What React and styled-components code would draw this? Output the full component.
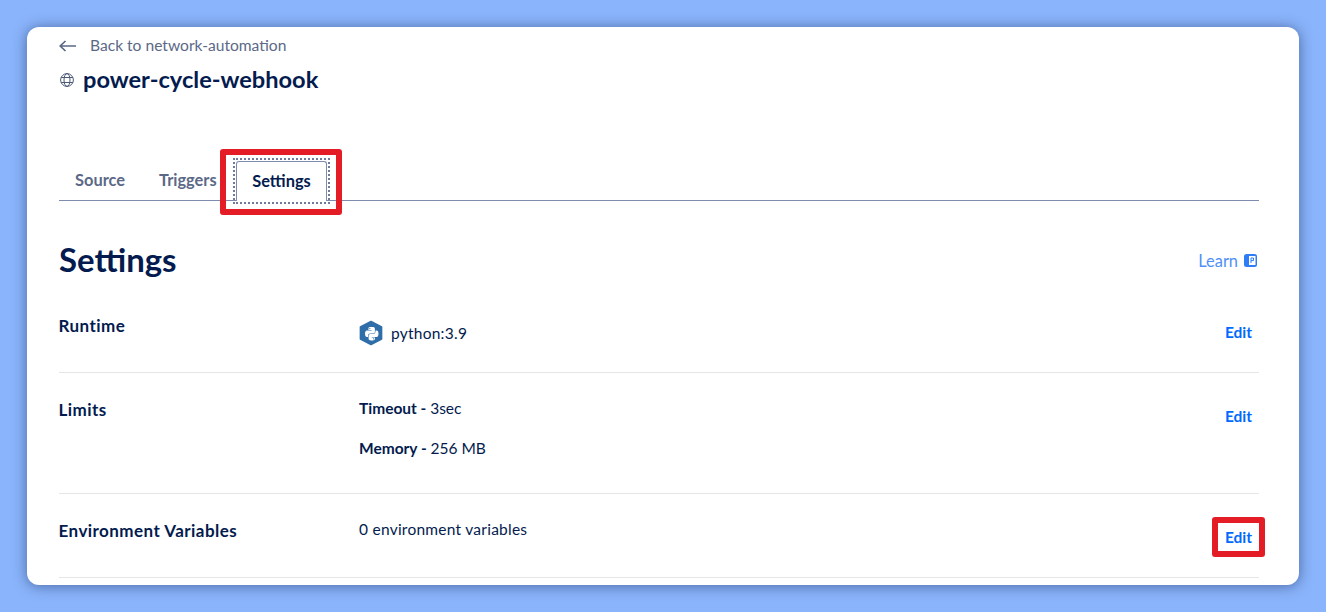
import React from "react";
import styled, { createGlobalStyle } from "styled-components";
import { FaPython } from "react-icons/fa";

const Global = createGlobalStyle`
  html, body { margin: 0; padding: 0; height: 100%; background: #8ab4fb; }
  body { font-family: Lato, "Open Sans", sans-serif; overflow: hidden; }
`;
const Page = styled.div`
  width: 1326px; height: 612px; box-sizing: border-box; padding: 27px;
`;
const Card = styled.main`
  width: 1272px; height: 558px; box-sizing: border-box; padding: 8px 40px 0 32px;
  background: #fff; border-radius: 12px; overflow: hidden;
  box-shadow: 0 1px 14px rgba(20, 40, 90, 0.55);
  color: #031b4e;
`;
const BackRow = styled.a`
  display: flex; align-items: center; gap: 14px; height: 20px;
  font-size: 15.6px; color: #5b6987; line-height: 20px;
  svg { margin-top: 2px; }
`;
const TitleRow = styled.div`
  display: flex; align-items: center; gap: 8px; height: 30px; margin-top: 9px;
  svg { margin-top: 2px; }
`;
const Title = styled.h1`
  margin: 0; font-size: 23.6px; font-weight: 700; line-height: 30px; color: #031b4e;
`;
const TabBar = styled.nav`
  display: flex; align-items: flex-end; height: 43px; margin-top: 63px;
  border-bottom: 1px solid #7d8bad;
`;
const Tab = styled.div`
  font-size: 16.4px; font-weight: 700; color: #5b6987; line-height: 20px;
  width: ${p => p.$w}px; box-sizing: border-box; padding-left: 16px; padding-bottom: 10px;
`;
const ActiveTab = styled.div`
  position: relative; width: 91px; height: 40px; box-sizing: border-box; margin-left: 1px; margin-bottom: -1px;
  border: 1px solid #7d8bad; border-bottom: none; border-radius: 3px 3px 0 0; background: #fff;
  font-size: 16.4px; font-weight: 700; color: #031b4e; text-align: center; line-height: 38px;
  &::before {
    content: ""; position: absolute; left: -4px; right: -4px; top: -4px; bottom: -3px;
    border: 2px dotted #6f7b99;
  }
  &::after {
    content: ""; position: absolute; left: -17px; right: -16px; top: -13px; bottom: -14px;
    border: 6px solid #e31c25; border-radius: 3px;
  }
`;
const HeadRow = styled.div`
  display: flex; align-items: center; justify-content: space-between; height: 40px; margin-top: 39px;
`;
const H2 = styled.h2`
  margin: 0; font-size: 32.9px; font-weight: 700; color: #031b4e; line-height: 40px;
`;
const Learn = styled.a`
  display: flex; align-items: center; gap: 6px; font-size: 16.4px; color: #4f8ff7; padding-right: 2px;
`;
const Row = styled.section`
  display: grid; grid-template-columns: 300px 1fr auto; box-sizing: border-box;
  height: ${p => p.$h}px; border-bottom: 1px solid #e6e6e6; padding-top: ${p => p.$pt}px;
`;
const Label = styled.div`
  font-size: 17px; font-weight: 700; line-height: 22px; color: #031b4e; letter-spacing: 0.45px;
  margin-left: -0.5px; margin-top: ${p => p.$mt || 0}px;
`;
const Value = styled.div`
  display: flex; flex-direction: ${p => p.$col ? "column" : "row"}; align-items: ${p => p.$col ? "flex-start" : "center"};
  gap: ${p => p.$col ? "20px" : "8px"}; font-size: 15.5px; line-height: 20px; color: #031b4e; align-self: start;
  margin-top: ${p => p.$mt || 0}px; letter-spacing: ${p => p.$col ? "0" : "0.25px"};
`;
const Strong = styled.strong`font-weight: 700;`;
const EditCell = styled.div`
  position: relative; width: 41px; height: 28px; display: flex; align-items: center; justify-content: center;
  margin-top: ${p => p.$mt || 0}px;
`;
const Edit = styled.a`
  font-size: 15.5px; font-weight: 700; color: #0069ff; line-height: 28px;
`;
const Highlight = styled.div`
  position: absolute; inset: -6px;
  border: 6px solid #e31c25; border-radius: 3px;
`;

const Arrow = () => (
  <svg width="17" height="12" viewBox="0 0 17 12" fill="none" stroke="#5b6987" strokeWidth="1.7">
    <path d="M1 6h16M6.5 1 1.2 6l5.3 5" />
  </svg>
);
const Globe = () => (
  <svg width="16" height="16" viewBox="0 0 16 16" fill="none" stroke="#4a5875" strokeWidth="1">
    <circle cx="8" cy="8" r="6.4" />
    <ellipse cx="8" cy="8" rx="3" ry="6.4" />
    <path d="M2.2 5.5h11.6M2.2 10.5h11.6" />
  </svg>
);
const BookIcon = () => (
  <svg width="13" height="13" viewBox="0 0 13 13">
    <rect width="13" height="13" rx="2.5" fill="#2f7df6" />
    <rect x="5" y="2" width="6.5" height="9" fill="#fff" />
    <path d="M7 4h2.5v2.6H7zM7 6.5v2.5" fill="none" stroke="#2f7df6" strokeWidth="1" />
  </svg>
);
const PythonIcon = () => (
  <svg width="24" height="26" viewBox="0 0 24 26">
    <path d="M12 1.5 22.6 7v12L12 24.5 1.4 19V7z" fill="#2f6ea8" stroke="#2f6ea8" strokeWidth="1.5" strokeLinejoin="round" />
    <FaPython x="5" y="6" width="14" height="14" color="#fff" />
  </svg>
);

export default function App() {
  return (
    <Page>
      <Global />
      <Card>
        <BackRow><Arrow />Back to network-automation</BackRow>
        <TitleRow><Globe /><Title>power-cycle-webhook</Title></TitleRow>
        <TabBar>
          <Tab $w={84}>Source</Tab>
          <Tab $w={92}>Triggers</Tab>
          <ActiveTab>Settings</ActiveTab>
        </TabBar>
        <HeadRow>
          <H2>Settings</H2>
          <Learn>Learn <BookIcon /></Learn>
        </HeadRow>
        <Row $h={93} $pt={35}>
          <Label>Runtime</Label>
          <Value $mt={5}><PythonIcon />python:3.9</Value>
          <EditCell $mt={3}><Edit>Edit</Edit></EditCell>
        </Row>
        <Row $h={121} $pt={26}>
          <Label>Limits</Label>
          <Value $col $mt={-1}>
            <span><Strong>Timeout - </Strong>3sec</span>
            <span><Strong>Memory - </Strong>256 MB</span>
          </Value>
          <EditCell $mt={3}><Edit>Edit</Edit></EditCell>
        </Row>
        <Row $h={84} $pt={26}>
          <Label>Environment Variables</Label>
          <Value $mt={-1}>0 environment variables</Value>
          <EditCell $mt={3}><Edit>Edit</Edit><Highlight /></EditCell>
        </Row>
      </Card>
    </Page>
  );
}
